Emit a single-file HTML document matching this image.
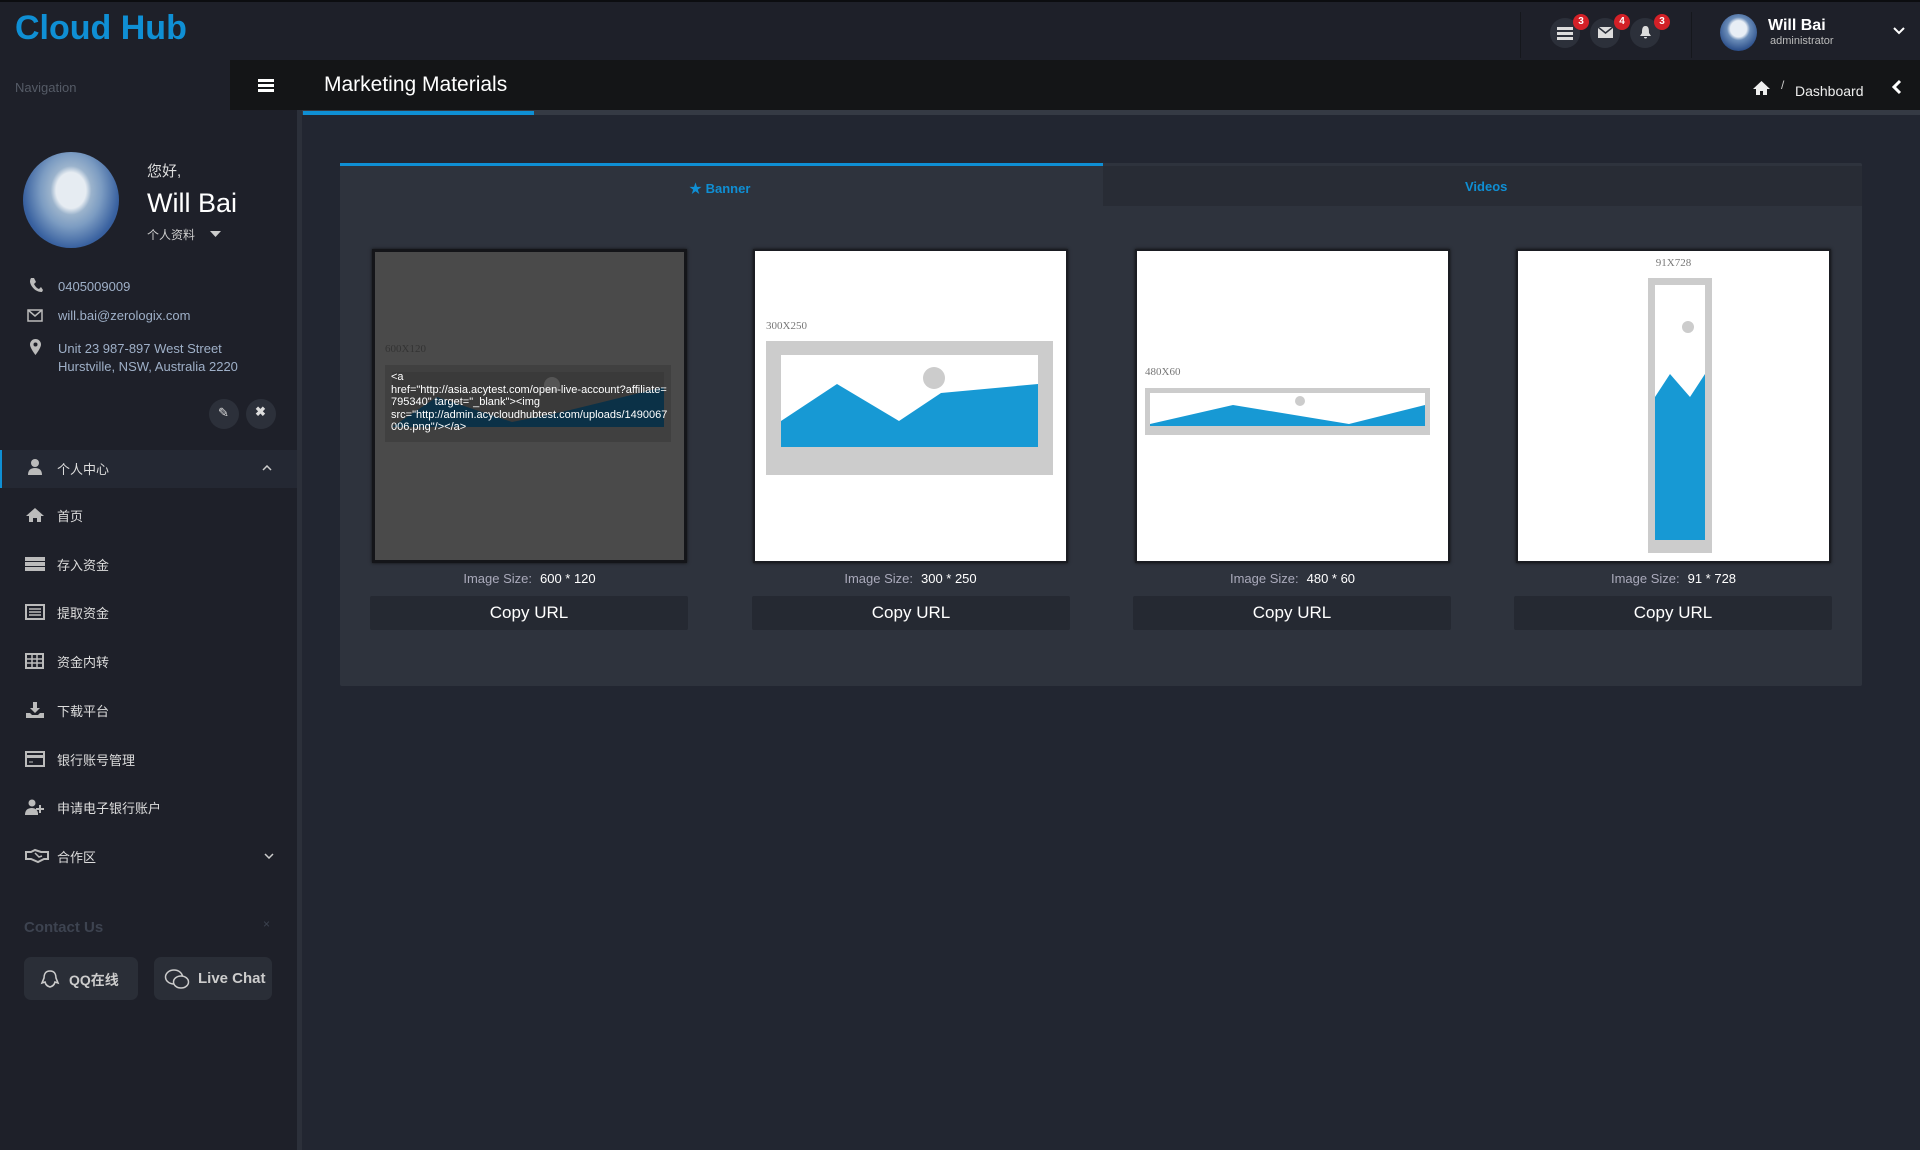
<!DOCTYPE html>
<html><head><meta charset="utf-8"><style>
*{margin:0;padding:0;box-sizing:border-box}
body{width:1920px;height:1150px;background:#222631;font-family:"Liberation Sans","Noto Sans CJK SC",sans-serif;position:relative;overflow:hidden;color:#ccc}
.a{position:absolute}
.cn{font-family:"Liberation Sans","Noto Sans CJK SC",sans-serif}
.card{position:absolute;top:249px;width:315px;height:314px;background:#fff;border:2px solid #1a1c22;box-shadow:0 0 3px #111}
.sz{position:absolute;top:571px;width:315px;text-align:center;font-size:13px;color:#aab}
.sz b{color:#fff;font-weight:normal;margin-left:8px}
.btn{position:absolute;top:596px;width:318px;height:34px;background:#252932;color:#fff;font-size:17px;text-align:center;line-height:34px;border-radius:2px}
.lbl{font-family:"Liberation Serif",serif;font-size:11px;color:#777;position:absolute}
.mi{position:absolute;left:57px;font-size:13px;color:#ddd}
.ic{position:absolute;left:25px;width:20px;height:16px}
.circ{position:absolute;width:30px;height:30px;border-radius:50%;background:#2c303a}
.bd{position:absolute;width:16px;height:16px;border-radius:50%;background:#d32027;color:#fff;font-size:10px;font-weight:bold;text-align:center;line-height:16px}
</style></head><body>
<!-- header -->
<div class="a" style="left:0;top:0;width:1920px;height:60px;background:#1e2029;border-top:2px solid #0c0d10"></div>
<div class="a" style="left:15px;top:9px;font-size:34px;font-weight:bold;color:#0f8fd4;letter-spacing:0px">Cloud Hub</div>
<div class="a" style="left:1520px;top:12px;width:1px;height:46px;background:#15171c"></div>
<div class="a" style="left:1691px;top:12px;width:1px;height:46px;background:#15171c"></div>
<div class="circ" style="left:1550px;top:18px"></div>
<div class="circ" style="left:1590px;top:18px"></div>
<div class="circ" style="left:1630px;top:18px"></div>
<svg class="a" style="left:1557px;top:26px" width="16" height="14"><rect y="1" width="16" height="3" fill="#ddd"/><rect y="6" width="16" height="3" fill="#ddd"/><rect y="11" width="16" height="3" fill="#ddd"/></svg>
<svg class="a" style="left:1598px;top:27px" width="15" height="11"><rect width="15" height="11" fill="#ddd"/><path d="M0 0L7.5 6L15 0" stroke="#2c303a" fill="none" stroke-width="1.5"/></svg>
<svg class="a" style="left:1639px;top:25px" width="13" height="15"><path d="M6.5 1C3 1 3 5 3 8L1 11H12L10 8C10 5 10 1 6.5 1Z M5 12a1.5 1.5 0 0 0 3 0Z" fill="#ddd"/></svg>
<div class="bd" style="left:1573px;top:14px">3</div>
<div class="bd" style="left:1614px;top:14px">4</div>
<div class="bd" style="left:1654px;top:14px">3</div>
<div class="a" style="left:1720px;top:14px;width:37px;height:37px;border-radius:50%;background:radial-gradient(circle at 50% 40%,#e8eef5 0 28%,#6a8cb8 40%,#2c4f8a 75%)"></div>
<div class="a" style="left:1768px;top:17px;font-size:16px;font-weight:bold;color:#fff">Will Bai</div>
<div class="a" style="left:1770px;top:35px;font-size:11px;color:#bbb">administrator</div>
<svg class="a" style="left:1893px;top:27px" width="12" height="8"><path d="M1 1L6 6L11 1" stroke="#fff" stroke-width="2" fill="none"/></svg>
<!-- sidebar -->
<div class="a" style="left:0;top:60px;width:300px;height:1090px;background:#1e2029"></div>
<div class="a" style="left:297px;top:110px;width:5px;height:1040px;background:#2c303a"></div>
<div class="a" style="left:15px;top:80px;font-size:13px;color:#555b66">Navigation</div>
<!-- title bar -->
<div class="a" style="left:230px;top:60px;width:1690px;height:50px;background:#141517"></div>
<div class="a" style="left:302px;top:110px;width:1618px;height:5px;background:#353a44"></div>
<div class="a" style="left:303px;top:111px;width:231px;height:4px;background:#0f8fd4"></div>
<svg class="a" style="left:258px;top:79px" width="16" height="13"><rect width="16" height="3" fill="#fff"/><rect y="5" width="16" height="3" fill="#fff"/><rect y="10" width="16" height="3" fill="#fff"/></svg>
<div class="a" style="left:324px;top:73px;font-size:21px;color:#fff">Marketing Materials</div>
<svg class="a" style="left:1752px;top:80px" width="19" height="16"><path d="M9.5 1L1 9H4V15H8V11H11V15H15V9H18Z" fill="#eee"/></svg>
<div class="a" style="left:1781px;top:78px;font-size:12px;color:#ccc">/</div>
<div class="a" style="left:1795px;top:83px;font-size:14px;color:#eee">Dashboard</div>
<svg class="a" style="left:1891px;top:79px" width="11" height="16"><path d="M9 2L3 8L9 14" stroke="#fff" stroke-width="3" fill="none"/></svg>
<!-- profile -->
<div class="a" style="left:23px;top:152px;width:96px;height:96px;border-radius:50%;background:radial-gradient(ellipse at 50% 40%,#e6ecf2 0 22%,#9bb3cc 30%,#7c9cc2 45%,#3a62a0 70%,#1d3f80 100%)"></div>
<div class="a cn" style="left:147px;top:160px;font-size:15px;color:#ddd">您好,</div>
<div class="a" style="left:147px;top:188px;font-size:27px;color:#fff">Will Bai</div>
<div class="a cn" style="left:147px;top:226px;font-size:12px;color:#ccc">个人资料</div>
<svg class="a" style="left:210px;top:231px" width="11" height="7"><path d="M0 0H11L5.5 6Z" fill="#ccc"/></svg>
<svg class="a" style="left:29px;top:277px" width="14" height="16"><path d="M2 1L5 1L7 5L5 7Q7 11 10 12L12 10L14 13L13 15Q6 15 2 8Q0 4 2 1Z" fill="#bbb"/></svg>
<div class="a" style="left:58px;top:279px;font-size:13px;color:#9fb0c8">0405009009</div>
<svg class="a" style="left:27px;top:309px" width="16" height="13"><rect x="1" y="1" width="14" height="11" fill="none" stroke="#bbb" stroke-width="1.5"/><path d="M1 1L8 7L15 1" stroke="#bbb" fill="none" stroke-width="1.5"/></svg>
<div class="a" style="left:58px;top:308px;font-size:13px;color:#9fb0c8">will.bai@zerologix.com</div>
<svg class="a" style="left:30px;top:339px" width="11" height="16"><path d="M5.5 0A5.5 5.5 0 0 1 11 5.5C11 9 5.5 16 5.5 16S0 9 0 5.5A5.5 5.5 0 0 1 5.5 0Z" fill="#bbb"/><circle cx="5.5" cy="5.5" r="2" fill="#1e2029"/></svg>
<div class="a" style="left:58px;top:340px;font-size:13px;color:#9fb0c8;line-height:18px">Unit 23 987-897 West Street<br>Hurstville, NSW, Australia 2220</div>
<div class="circ" style="left:209px;top:399px"></div>
<div class="circ" style="left:246px;top:399px"></div>
<div class="a" style="left:218px;top:405px;font-size:13px;color:#ddd">✎</div>
<div class="a" style="left:255px;top:404px;font-size:13px;color:#ddd;font-weight:bold">✖</div>
<!-- menu -->
<div class="a" style="left:0;top:450px;width:297px;height:38px;background:#242833"></div>
<div class="a" style="left:0;top:450px;width:2px;height:38px;background:#0f8fd4"></div>
<svg class="ic" style="top:459px" viewBox="0 0 20 16"><circle cx="10" cy="4" r="4" fill="#bbb"/><path d="M3 16Q3 9 10 9Q17 9 17 16Z" fill="#bbb"/></svg>
<div class="mi cn" style="top:459px">个人中心</div>
<svg class="a" style="left:262px;top:465px" width="10" height="6"><path d="M1 5L5 1L9 5" stroke="#ccc" stroke-width="1.5" fill="none"/></svg>
<svg class="ic" style="top:507px" viewBox="0 0 20 16"><path d="M10 1L1 9H4V15H8V11H12V15H16V9H19Z" fill="#bbb"/></svg>
<div class="mi cn" style="top:506px">首页</div>
<svg class="ic" style="top:556px" viewBox="0 0 20 16"><rect y="1" width="20" height="4" fill="#bbb"/><rect y="6" width="20" height="4" fill="#bbb"/><rect y="11" width="20" height="4" fill="#bbb"/></svg>
<div class="mi cn" style="top:555px">存入资金</div>
<svg class="ic" style="top:604px" viewBox="0 0 20 16"><rect x="1" y="1" width="18" height="14" fill="none" stroke="#bbb" stroke-width="2"/><path d="M4 5H16M4 8H16M4 11H16" stroke="#bbb" stroke-width="1.5"/></svg>
<div class="mi cn" style="top:603px">提取资金</div>
<svg class="ic" style="top:653px" viewBox="0 0 20 16"><rect x="1" y="1" width="17" height="14" fill="none" stroke="#bbb" stroke-width="2"/><path d="M1 6H18M1 10H18M7 1V15M12 1V15" stroke="#bbb" stroke-width="1.5"/></svg>
<div class="mi cn" style="top:652px">资金内转</div>
<svg class="ic" style="top:702px" viewBox="0 0 20 16"><path d="M8 0H12V6H15L10 11L5 6H8Z M1 11H5L7 13H13L15 11H19V16H1Z" fill="#bbb"/></svg>
<div class="mi cn" style="top:701px">下载平台</div>
<svg class="ic" style="top:751px" viewBox="0 0 20 16"><rect x="1" y="1" width="18" height="14" fill="none" stroke="#bbb" stroke-width="2"/><rect x="1" y="4" width="18" height="3" fill="#bbb"/><path d="M4 11H8" stroke="#bbb"/></svg>
<div class="mi cn" style="top:750px">银行账号管理</div>
<svg class="ic" style="top:799px" viewBox="0 0 20 16"><circle cx="7" cy="4" r="3.5" fill="#bbb"/><path d="M0 16Q0 9 7 9Q12 9 13 14V16Z M14 6H16V9H19V11H16V14H14V11H11V9H14Z" fill="#bbb"/></svg>
<div class="mi cn" style="top:798px">申请电子银行账户</div>
<svg class="ic" style="top:848px;width:24px" viewBox="0 0 24 16"><path d="M1 4H6L10 2L16 4H23V11H19L13 14L6 11H1Z" fill="none" stroke="#bbb" stroke-width="2"/><path d="M10 5L14 9L17 8" stroke="#bbb" stroke-width="1.5" fill="none"/></svg>
<div class="mi cn" style="top:847px">合作区</div>
<svg class="a" style="left:264px;top:853px" width="10" height="6"><path d="M1 1L5 5L9 1" stroke="#ccc" stroke-width="1.5" fill="none"/></svg>
<div class="a" style="left:24px;top:919px;font-size:15px;font-weight:bold;color:#3d4350">Contact Us</div>
<div class="a" style="left:263px;top:917px;font-size:12px;color:#3d4350">×</div>
<div class="a" style="left:24px;top:957px;width:114px;height:43px;background:#2a2e37;border-radius:7px"></div>
<div class="a" style="left:154px;top:957px;width:118px;height:43px;background:#2a2e37;border-radius:7px"></div>
<svg class="a" style="left:40px;top:969px" width="20" height="20"><path d="M10 2C5 2 4 6 4 9L2 14L5 13Q6 17 10 18Q14 17 15 13L18 14L16 9C16 6 15 2 10 2Z" fill="none" stroke="#ccc" stroke-width="1.6"/></svg>
<div class="a cn" style="left:69px;top:970px;font-size:14px;font-weight:bold;color:#ccc">QQ在线</div>
<svg class="a" style="left:164px;top:968px" width="26" height="22"><ellipse cx="10" cy="9" rx="8.5" ry="7" fill="none" stroke="#ccc" stroke-width="1.5"/><ellipse cx="17" cy="14" rx="7.5" ry="6" fill="#2a2e37" stroke="#ccc" stroke-width="1.5"/></svg>
<div class="a" style="left:198px;top:970px;font-size:15px;font-weight:bold;color:#ccc">Live Chat</div>
<!-- content panel -->
<div class="a" style="left:340px;top:163px;width:1522px;height:523px;background:#2e333d;border-radius:2px"></div>
<div class="a" style="left:1103px;top:166px;width:759px;height:40px;background:#282c35"></div>
<div class="a" style="left:340px;top:163px;width:763px;height:3px;background:#0f8fd4"></div>
<div class="a" style="left:689px;top:178px;font-size:13px;font-weight:bold;color:#0f8fd4">★ Banner</div>
<div class="a" style="left:1465px;top:179px;font-size:13px;font-weight:bold;color:#0f8fd4">Videos</div>
<!-- card 1 -->
<div class="card" style="left:372px;background:#4a4a4a;border:3px solid #141519"></div>
<div class="lbl" style="left:385px;top:343px;color:#333">600X120</div>
<div class="a" style="left:385px;top:365px;width:286px;height:77px;background:#404040"></div>
<svg class="a" style="left:392px;top:372px" width="272" height="55"><rect width="272" height="55" fill="#3a3a3a"/><path d="M0 55L45 25L120 50L170 40L272 15V55Z" fill="#0b3147"/><circle cx="160" cy="13" r="8" fill="#555"/></svg>
<div class="a" style="left:391px;top:371px;width:280px;font-family:'Liberation Sans Narrow','Liberation Sans',sans-serif;font-size:11px;line-height:12.5px;color:#fff;word-break:break-all">&lt;a<br>href="http://asia.acytest.com/open-live-account?affiliate=795340" target="_blank"&gt;&lt;img<br>src="http://admin.acycloudhubtest.com/uploads/1490067006.png"/&gt;&lt;/a&gt;</div>
<div class="sz" style="left:372px">Image Size:<b>600 * 120</b></div>
<div class="btn" style="left:370px">Copy URL</div>
<!-- card 2 -->
<div class="card" style="left:753px"></div>
<div class="lbl" style="left:766px;top:320px">300X250</div>
<svg class="a" style="left:766px;top:341px" width="287" height="134" viewBox="0 0 287 134" preserveAspectRatio="none"><rect width="287" height="134" fill="#cccccc"/><rect x="15" y="14" width="257" height="92" fill="#fff"/><circle cx="168" cy="37" r="11" fill="#ccc"/><path d="M15 106V80L71 43L133 80L175 52L272 43V106Z" fill="#1799d4"/></svg>
<div class="sz" style="left:753px">Image Size:<b>300 * 250</b></div>
<div class="btn" style="left:752px">Copy URL</div>
<!-- card 3 -->
<div class="card" style="left:1135px"></div>
<div class="lbl" style="left:1145px;top:366px">480X60</div>
<svg class="a" style="left:1145px;top:388px" width="285" height="47" viewBox="0 0 285 47" preserveAspectRatio="none"><rect width="285" height="47" fill="#ccc"/><rect x="5" y="5" width="275" height="33" fill="#fff"/><circle cx="155" cy="13" r="5" fill="#ccc"/><path d="M5 38V36L88 17L204 36L280 17V38Z" fill="#1799d4"/></svg>
<div class="sz" style="left:1135px">Image Size:<b>480 * 60</b></div>
<div class="btn" style="left:1133px">Copy URL</div>
<!-- card 4 -->
<div class="card" style="left:1516px"></div>
<div class="lbl" style="left:1516px;top:257px;width:315px;text-align:center">91X728</div>
<svg class="a" style="left:1648px;top:278px" width="64" height="275" viewBox="0 0 64 275" preserveAspectRatio="none"><rect width="64" height="275" fill="#ccc"/><rect x="7" y="7" width="50" height="255" fill="#fff"/><circle cx="40" cy="49" r="6" fill="#ccc"/><path d="M7 262V119L22 96L42 119L57 96V262Z" fill="#1799d4"/></svg>
<div class="sz" style="left:1516px">Image Size:<b>91 * 728</b></div>
<div class="btn" style="left:1514px">Copy URL</div>
</body></html>
